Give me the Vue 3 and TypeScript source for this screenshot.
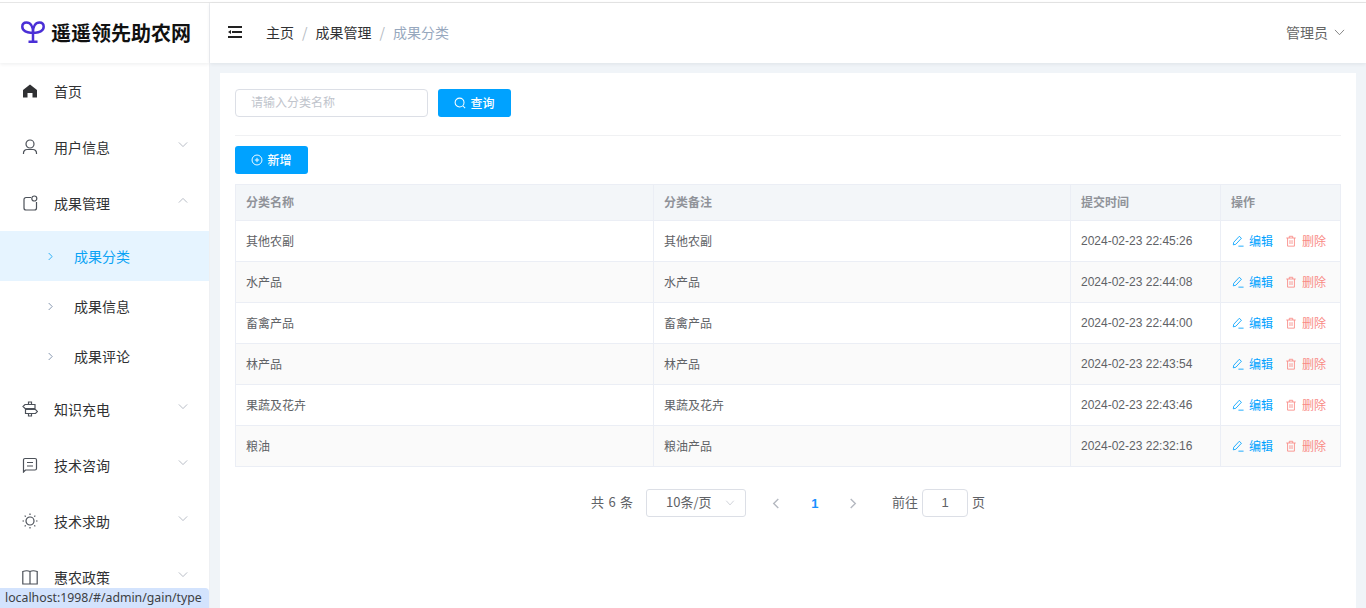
<script setup lang="ts">
interface Row { name: string; note: string; time: string }
const rows: Row[] = [
  { name: '其他农副', note: '其他农副', time: '2024-02-23 22:45:26' },
  { name: '水产品', note: '水产品', time: '2024-02-23 22:44:08' },
  { name: '畜禽产品', note: '畜禽产品', time: '2024-02-23 22:44:00' },
  { name: '林产品', note: '林产品', time: '2024-02-23 22:43:54' },
  { name: '果蔬及花卉', note: '果蔬及花卉', time: '2024-02-23 22:43:46' },
  { name: '粮油', note: '粮油产品', time: '2024-02-23 22:32:16' },
]
const subs = [
  { label: '成果分类', active: true },
  { label: '成果信息', active: false },
  { label: '成果评论', active: false },
]
</script>

<template>
  <div class="page">
    <div class="topline"></div>
    <div class="shell">
      <aside class="side">
        <div class="logo">
          <svg class="logo-ic" viewBox="0 0 24 22" width="24" height="22" fill="none" stroke="#4a2fd6" stroke-width="2.500">
            <path d="M12 11.500C12 5.500 9.500 1.500 5.500 1.500 2.800 1.500 1.300 3.300 1.300 5.800c0 3.800 4.500 6.700 10.700 5.700zM12 11.500c0-6 2.500-10 6.500-10 2.700 0 4.200 1.800 4.200 4.300 0 3.800-4.500 6.700-10.700 5.700zM12 11.500v9M7.500 20.700h9" />
          </svg>
          <span>遥遥领先助农网</span>
        </div>
        <nav class="menu">
          <div class="item">
            <svg class="ic" viewBox="0 0 16 16"><path fill="#303133" stroke="none" d="M8 1.500 1 7v7.500h4.500V10h5v4.500H15V7z" /></svg>
            <span>首页</span>
          </div>
          <div class="item">
            <svg class="ic" viewBox="0 0 16 16"><circle cx="8" cy="5" r="4" /><path d="M1.500 15v-1a3.500 3.500 0 0 1 3.500-3.500h6a3.500 3.500 0 0 1 3.500 3.500v1" /></svg>
            <span>用户信息</span>
            <svg class="arrow" viewBox="0 0 12 8"><path d="M1 1.500 6 6.500l5-5" /></svg>
          </div>
          <div class="item">
            <svg class="ic" viewBox="0 0 16 16"><path d="M9 2.500H4a2 2 0 0 0-2 2V13a2 2 0 0 0 2 2h8.500a2 2 0 0 0 2-2V7" /><circle cx="12.300" cy="3.500" r="2.500" /></svg>
            <span>成果管理</span>
            <svg class="arrow" viewBox="0 0 12 8"><path d="M1 6.500 6 1.500l5 5" /></svg>
          </div>
          <div v-for="s in subs" :key="s.label" class="sub" :class="{ on: s.active }">
            <svg class="sub-arrow" viewBox="0 0 6 10"><path d="M.8.800 5 5 .8 9.200" /></svg>
            <span>{{ s.label }}</span>
          </div>
          <div class="item">
            <svg class="ic" viewBox="0 0 16 16"><path d="M3 3.500h10v4H3L1 5.500zM3.500 8.500h10l2 2-2 2h-10zM6.500 3.500V1h3v2.500M6.500 12.500V15h3v-2.500" /></svg>
            <span>知识充电</span>
            <svg class="arrow" viewBox="0 0 12 8"><path d="M1 1.500 6 6.500l5-5" /></svg>
          </div>
          <div class="item">
            <svg class="ic" viewBox="0 0 16 16"><path d="M1.500 15V3a1.500 1.500 0 0 1 1.500-1.500h10A1.500 1.500 0 0 1 14.500 3v8.500A1.500 1.500 0 0 1 13 13H3.500zM5 5.500h6M5 9h6" /></svg>
            <span>技术咨询</span>
            <svg class="arrow" viewBox="0 0 12 8"><path d="M1 1.500 6 6.500l5-5" /></svg>
          </div>
          <div class="item">
            <svg class="ic" viewBox="0 0 16 16"><circle cx="8" cy="8" r="4" /><path d="M8 .5v1.500M8 14v1.500M.5 8H2M14 8h1.500M2.700 2.700l1 1M12.300 12.300l1 1M2.700 13.300l1-1M12.300 3.700l1-1" /></svg>
            <span>技术求助</span>
            <svg class="arrow" viewBox="0 0 12 8"><path d="M1 1.500 6 6.500l5-5" /></svg>
          </div>
          <div class="item">
            <svg class="ic" viewBox="0 0 16 16"><path d="M.8 2.500Q5 1 8 2.500 11 1 15.200 2.500V15H.8zM8 2.500V15" /></svg>
            <span>惠农政策</span>
            <svg class="arrow" viewBox="0 0 12 8"><path d="M1 1.500 6 6.500l5-5" /></svg>
          </div>
        </nav>
      </aside>

      <div class="main">
        <header class="head">
          <svg class="fold" viewBox="0 0 14 12" width="14" height="12">
            <path d="M0 1h14M4 6h10M0 11h14" stroke="#222" stroke-width="1.800" fill="none" />
            <path d="M0 6l3-2v4z" fill="#222" />
          </svg>
          <div class="crumb">
            <span>主页</span><i>/</i><span>成果管理</span><i>/</i><span class="last">成果分类</span>
          </div>
          <div class="user">
            <span>管理员</span>
            <svg viewBox="0 0 12 8" width="11" height="7"><path d="M.8 1 6 6.500 11.200 1" fill="none" stroke="#777" stroke-width="1" /></svg>
          </div>
        </header>

        <main class="body">
          <section class="card">
            <div class="search">
              <div class="input">请输入分类名称</div>
              <button class="btn" type="button">
                <svg viewBox="0 0 14 14" width="12" height="12"><circle cx="6.500" cy="6.500" r="5.200" fill="none" stroke="#fff" stroke-width="1.200" /><path d="m10.500 10.500 2.500 2.500" stroke="#fff" stroke-width="1.200" /></svg>
                <span>查询</span>
              </button>
            </div>
            <div class="rule"></div>
            <button class="btn add" type="button">
              <svg viewBox="0 0 14 14" width="12" height="12"><circle cx="7" cy="7" r="5.800" fill="none" stroke="#fff" stroke-width="1.100" /><path d="M4.500 7h5M7 4.500v5" stroke="#fff" stroke-width="1.100" /></svg>
              <span>新增</span>
            </button>

            <div class="table">
              <div class="tr th">
                <div class="td c1">分类名称</div>
                <div class="td c2">分类备注</div>
                <div class="td c3">提交时间</div>
                <div class="td c4">操作</div>
              </div>
              <div v-for="(r, i) in rows" :key="r.time" class="tr" :class="{ alt: i % 2 === 1 }">
                <div class="td c1">{{ r.name }}</div>
                <div class="td c2">{{ r.note }}</div>
                <div class="td c3 time">{{ r.time }}</div>
                <div class="td c4 ops">
                  <span class="op edit">
                    <svg viewBox="0 0 14 14" width="12" height="12"><path d="M1.500 11.500 2 8.500 8.500 1.500l2.500 2.300L4.500 10.800zM7.500 13h6" fill="none" stroke="currentColor" stroke-width="1" /></svg>
                    <span>编辑</span>
                  </span>
                  <span class="op del">
                    <svg viewBox="0 0 14 14" width="12" height="12"><path d="M1.500 3.500h11M3 3.500V13h8V3.500M5 3.500V1.500h4v2M5.800 6v4.500M8.200 6v4.500" fill="none" stroke="currentColor" stroke-width="1" /></svg>
                    <span>删除</span>
                  </span>
                </div>
              </div>
            </div>

            <div class="pager">
              <span class="total">共 6 条</span>
              <div class="size">
                <span>10条/页</span>
                <svg viewBox="0 0 12 8" width="10" height="6"><path d="M1 1 6 6.500 11 1" fill="none" stroke="#c0c4cc" stroke-width="1" /></svg>
              </div>
              <svg class="nav" viewBox="0 0 8 12" width="8" height="11"><path d="M6.500 1 1.500 6l5 5" /></svg>
              <span class="num">1</span>
              <svg class="nav" viewBox="0 0 8 12" width="8" height="11"><path d="M1.500 1 6.500 6l-5 5" /></svg>
              <span class="goto">前往</span>
              <div class="jump">1</div>
              <span class="pg">页</span>
            </div>
          </section>
        </main>
      </div>
    </div>
    <div class="status">localhost:1998/#/admin/gain/type</div>
  </div>
</template>

<style>
html, body { margin: 0; height: 100%; overflow: hidden; }
</style>

<style scoped>
.page {
  height: 608px;
  overflow: hidden;
  position: relative;
  display: flex;
  flex-direction: column;
  font-family: "Noto Sans CJK SC", "Liberation Sans", sans-serif;
  font-size: 14px;
  color: #303133;
}
.topline { height: 1px; margin-top: 2px; background: #e6e6e6; flex: none; }
.shell { display: flex; flex: 1; min-height: 0; }
.side {
  width: 209px;
  flex: none;
  background: #fff;
  border-right: 1px solid #eef0f3;
  overflow: hidden;
}
.logo {
  height: 60px;
  box-sizing: border-box;
  display: flex;
  align-items: center;
  padding: 0 0 2px 21px;
  gap: 6px;
  font-size: 20px;
  font-weight: 700;
  color: #111;
  box-shadow: 0 1px 4px rgba(0, 21, 41, .08);
  position: relative;
}
.logo-ic { flex: none; }
.item {
  height: 56px;
  display: flex;
  align-items: center;
  padding-left: 22px;
  position: relative;
}
.item > span { margin: -1px 0 0 16px; }
.ic {
  width: 16px;
  height: 16px;
  fill: none;
  stroke: #4c5159;
  stroke-width: 1.200;
  flex: none;
}
.arrow {
  position: absolute;
  right: 21px;
  top: 22px;
  width: 10px;
  height: 7px;
  fill: none;
  stroke: #aab0ba;
  stroke-width: 1;
}
.sub {
  height: 50px;
  display: flex;
  align-items: center;
  padding-left: 48px;
}
.sub > span { margin: -1px 0 0 21px; }
.sub.on { background: #e6f4ff; color: #0aa3f5; }
.sub-arrow {
  width: 5px;
  height: 9px;
  fill: none;
  stroke: #6f82a0;
  stroke-width: 1;
  flex: none;
}
.sub.on .sub-arrow { stroke: #0aa3f5; }
.main { flex: 1; min-width: 0; display: flex; flex-direction: column; }
.head {
  height: 60px;
  box-sizing: border-box;
  flex: none;
  background: #fff;
  display: flex;
  align-items: center;
  padding: 0 21px 0 18px;
  box-shadow: 0 1px 4px rgba(0, 21, 41, .08);
  position: relative;
}
.fold { flex: none; margin-top: -2px; }
.crumb { margin: -3px 0 0 24px; display: flex; align-items: center; color: #303133; }
.crumb i { font-style: normal; color: #b4bac2; margin: 0 8px; font-weight: 400; }
.crumb .last { color: #97a8be; }
.user { margin: -3px 0 0 auto; display: flex; align-items: center; gap: 6px; color: #666; }
.user svg { margin-top: 1px; }
.body {
  flex: 1;
  min-height: 0;
  background: #f0f4f8;
  padding: 10px 10px 0;
}
.card {
  height: 100%;
  box-sizing: border-box;
  background: #fff;
  padding: 16px 15px 0;
}
.search { display: flex; gap: 10px; }
.input {
  width: 193px;
  height: 28px;
  box-sizing: border-box;
  border: 1px solid #dcdfe6;
  border-radius: 4px;
  padding-left: 15px;
  font-size: 12px;
  line-height: 24px;
  color: #c0c4cc;
}
.btn {
  width: 73px;
  height: 28px;
  border: 0;
  border-radius: 3px;
  background: #00a2ff;
  color: #fff;
  font: inherit;
  font-size: 12px;
  font-weight: 500;
  display: flex;
  align-items: center;
  justify-content: center;
  gap: 4px;
  padding: 0;
}
.btn span { margin-top: -1px; }
.rule { height: 1px; background: #f0f1f3; margin: 18px 0 10px; }
.add { margin-bottom: 10px; }
.table {
  border-top: 1px solid #ebeef5;
  border-left: 1px solid #ebeef5;
  font-size: 12px;
  color: #606266;
}
.tr { display: flex; height: 41px; }
.th { height: 36px; background: #f3f6f9; font-weight: 700; color: #909399; }
.alt { background: #fafafa; }
.td {
  box-sizing: border-box;
  border-right: 1px solid #ebeef5;
  border-bottom: 1px solid #ebeef5;
  display: flex;
  align-items: center;
  padding: 0 0 2px 10px;
}
.th .td { padding-bottom: 3px; }
.c1 { width: 418px; }
.c2 { width: 417px; }
.c3 { width: 150px; }
.time { font-family: "Liberation Sans", "Noto Sans CJK SC", sans-serif; padding-bottom: 0; }
.c4 { flex: 1; }
.ops { gap: 12px; padding-left: 11px; }
.op { display: flex; align-items: center; gap: 5px; }
.op svg { margin-top: 1px; }
.edit { color: #00a2ff; }
.del { color: #f98a85; }
.pager {
  display: flex;
  align-items: center;
  justify-content: center;
  margin-top: 22px;
  height: 28px;
  font-size: 13px;
  color: #606266;
}
.total, .size span, .goto, .pg { margin-top: -4px; }
.total { margin-right: 14px; width: 41px; white-space: nowrap; word-spacing: 1.500px; }
.size {
  width: 100px;
  height: 28px;
  box-sizing: border-box;
  border: 1px solid #dcdfe6;
  border-radius: 3px;
  display: flex;
  align-items: center;
  justify-content: space-between;
  padding: 0 10px 0 19px;
  margin-right: 26px;
}
.nav { fill: none; stroke: #b4b8c0; stroke-width: 1.500; }
.num { width: 69px; padding-left: 1px; box-sizing: border-box; text-align: center; color: #1890ff; font-weight: 700; font-size: 13px; font-family: "Liberation Sans", sans-serif; }
.goto { margin-left: 35px; margin-right: 4px; }
.jump {
  width: 46px;
  height: 28px;
  box-sizing: border-box;
  border: 1px solid #dcdfe6;
  border-radius: 4px;
  text-align: center;
  line-height: 26px;
  font-family: "Liberation Sans", sans-serif;
}
.pg { margin-left: 4px; }
.status {
  position: absolute;
  left: 0;
  bottom: 0;
  width: 209px;
  height: 20px;
  box-sizing: border-box;
  background: #d3e3fd;
  border-top-right-radius: 4px;
  padding-left: 5px;
  font-family: "Noto Sans", "Liberation Sans", sans-serif;
  font-size: 12.300px;
  line-height: 20px;
  color: #3c4043;
  white-space: nowrap;
}
</style>
